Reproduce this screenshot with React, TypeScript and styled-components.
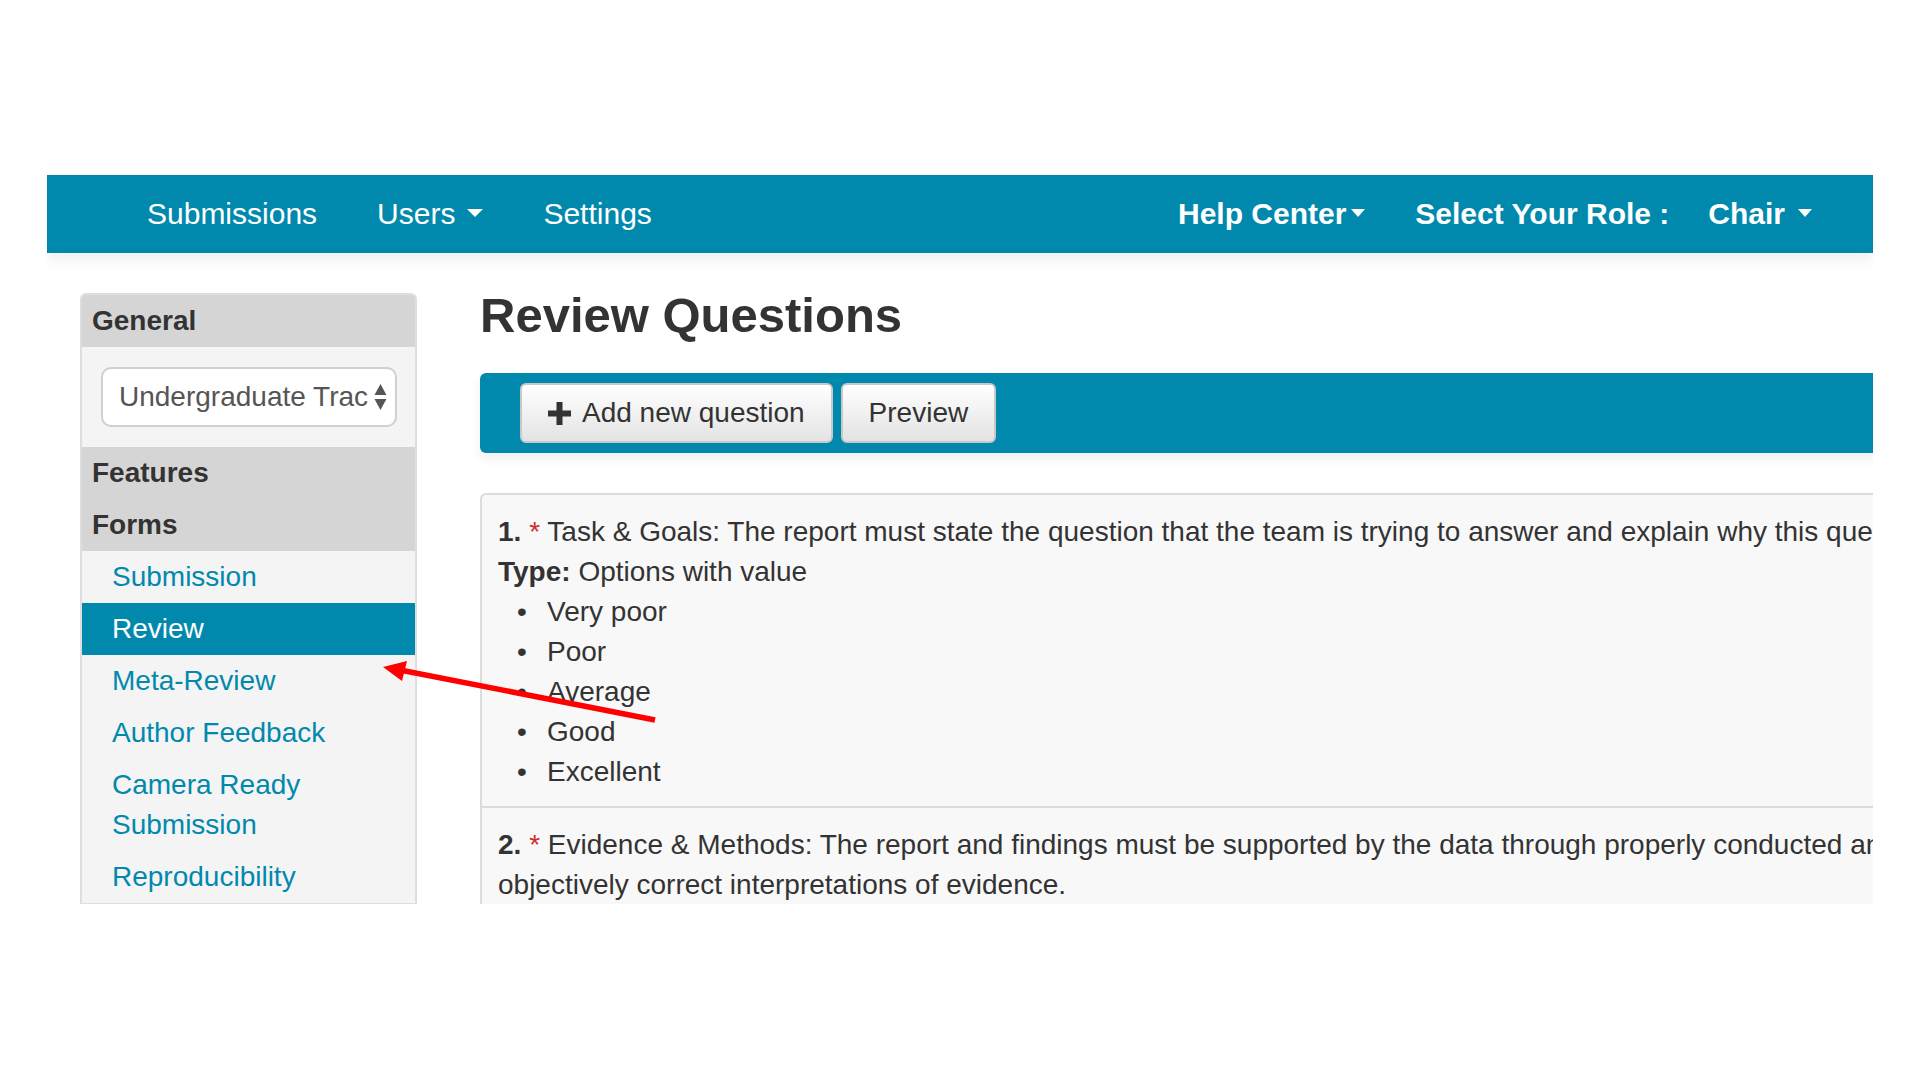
import React from "react";
import styled, { createGlobalStyle } from "styled-components";

const BRAND = "#0189ad";
const FONT = `"Liberation Sans", Arial, Helvetica, sans-serif`;

const GlobalStyle = createGlobalStyle`
  html, body {
    margin: 0;
    padding: 0;
    background: #ffffff;
    font-family: ${FONT};
    color: #333333;
  }
  * { box-sizing: border-box; }
`;

const Page = styled.div`
  position: relative;
  width: 1920px;
  height: 1080px;
  padding: 175px 0 0 47px;
  overflow: hidden;
`;

const Frame = styled.div`
  width: 1826px;
  height: 729px;
  overflow: hidden;
  display: flex;
  flex-direction: column;
  background: #ffffff;
`;

const NavBar = styled.nav`
  flex: 0 0 78px;
  height: 78px;
  background: ${BRAND};
  display: flex;
  align-items: center;
  padding: 0 61px 0 70px;
  box-shadow: 0 6px 14px rgba(0, 0, 0, 0.07);
  position: relative;
  z-index: 1;
`;

const NavGroup = styled.div<{ $right?: boolean }>`
  display: flex;
  align-items: center;
  margin-left: ${(p) => (p.$right ? "auto" : "0")};
`;

const NavItem = styled.div<{ $bold?: boolean; $gap?: number; $pad?: number; $ml?: number }>`
  display: flex;
  align-items: center;
  gap: ${(p) => p.$gap ?? 12}px;
  padding: 0 ${(p) => p.$pad ?? 30}px;
  margin-left: ${(p) => p.$ml ?? 0}px;
  color: #ffffff;
  font-size: 30px;
  font-weight: ${(p) => (p.$bold ? 700 : 400)};
  line-height: 40px;
  white-space: nowrap;
`;

const Caret = styled.span<{ $w?: number }>`
  display: inline-block;
  width: 0;
  height: 0;
  border-left: ${(p) => (p.$w ?? 15) / 2}px solid transparent;
  border-right: ${(p) => (p.$w ?? 15) / 2}px solid transparent;
  border-top: 8px solid #ffffff;
  margin-top: -3px;
`;

const ContentRow = styled.div`
  display: flex;
  align-items: flex-start;
  gap: 63px;
  padding: 40px 0 0 33px;
`;

const Sidebar = styled.aside`
  flex: 0 0 337px;
  width: 337px;
  border: 2px solid #dedede;
  border-radius: 6px 6px 0 0;
  background: #f4f4f4;
  overflow: hidden;
`;

const SideHeader = styled.div`
  height: 52px;
  line-height: 52px;
  padding-left: 10px;
  background: #d5d5d5;
  font-size: 28px;
  font-weight: 700;
  color: #333333;
`;

const SelectPanel = styled.div`
  height: 100px;
  padding: 20px 18px 20px 19px;
`;

const SelectBox = styled.div`
  height: 60px;
  background: #ffffff;
  border: 2px solid #cfcfcf;
  border-radius: 10px;
  display: flex;
  align-items: center;
  padding: 0 8px 0 16px;
  gap: 6px;
`;

const SelectText = styled.span`
  width: 250px;
  overflow: hidden;
  white-space: nowrap;
  font-size: 28px;
  color: #555555;
`;

const SideLink = styled.div<{ $active?: boolean }>`
  padding: 6px 12px 6px 30px;
  font-size: 28px;
  line-height: 40px;
  color: ${(p) => (p.$active ? "#ffffff" : BRAND)};
  background: ${(p) => (p.$active ? BRAND : "transparent")};
`;

const Main = styled.main`
  flex: 0 0 1678px;
  width: 1678px;
`;

const Title = styled.h1`
  margin: 0;
  font-size: 49px;
  line-height: 45px;
  font-weight: 700;
  color: #333333;
`;

const Toolbar = styled.div`
  margin-top: 35px;
  height: 80px;
  background: ${BRAND};
  border-radius: 6px 0 0 6px;
  display: flex;
  align-items: center;
  gap: 8px;
  padding-left: 40px;
  box-shadow: 0 6px 12px rgba(0, 0, 0, 0.06);
`;

const Button = styled.button`
  height: 60px;
  padding: 0 26px;
  display: flex;
  align-items: center;
  gap: 11px;
  border: 2px solid #c8c8c8;
  border-radius: 6px;
  background: linear-gradient(#ffffff, #e3e3e3);
  font-family: ${FONT};
  font-size: 28px;
  color: #333333;
`;

const QuestionList = styled.div`
  margin-top: 40px;
  border: 2px solid #dcdcdc;
  border-radius: 6px 0 0 0;
  background: #f8f8f8;
`;

const Question = styled.div<{ $first?: boolean }>`
  padding: 17px 16px 14px;
  font-size: 28px;
  line-height: 40px;
  color: #333333;
  border-top: ${(p) => (p.$first ? "none" : "2px solid #dcdcdc")};
`;

const Num = styled.b`
  font-weight: 700;
`;

const Star = styled.span`
  color: #c9302c;
`;

const Options = styled.ul`
  margin: 0;
  padding-left: 19px;
  list-style: none;
`;

const Option = styled.li`
  display: flex;
  &::before {
    content: "•";
    flex: 0 0 30px;
    width: 30px;
  }
`;

const Overlay = styled.svg`
  position: absolute;
  left: 0;
  top: 0;
  width: 1920px;
  height: 1080px;
  pointer-events: none;
`;

const PlusIcon = () => (
  <svg width="23" height="23" viewBox="0 0 23 23">
    <rect x="8.5" y="0" width="6" height="23" fill="#333" />
    <rect x="0" y="8.5" width="23" height="6" fill="#333" />
  </svg>
);

const SortArrows = () => (
  <svg width="13" height="30" viewBox="0 0 13 30">
    <polygon points="6.5,2 12.5,13 0.5,13" fill="#555" />
    <polygon points="0.5,17 12.5,17 6.5,28" fill="#555" />
  </svg>
);

const options = ["Very poor", "Poor", "Average", "Good", "Excellent"];

export default function App() {
  return (
    <Page>
      <GlobalStyle />
      <Frame>
        <NavBar>
          <NavGroup>
            <NavItem>Submissions</NavItem>
            <NavItem>
              Users <Caret $w={16} />
            </NavItem>
            <NavItem>Settings</NavItem>
          </NavGroup>
          <NavGroup $right>
            <NavItem $bold $gap={5} $pad={0}>
              Help Center
              <Caret $w={15} />
            </NavItem>
            <NavItem $bold $pad={0} $ml={50}>
              Select Your Role :
            </NavItem>
            <NavItem $bold $gap={13} $pad={0} $ml={39}>
              Chair <Caret $w={14} />
            </NavItem>
          </NavGroup>
        </NavBar>

        <ContentRow>
          <Sidebar>
            <SideHeader>General</SideHeader>
            <SelectPanel>
              <SelectBox>
                <SelectText>Undergraduate Track</SelectText>
                <SortArrows />
              </SelectBox>
            </SelectPanel>
            <SideHeader>Features</SideHeader>
            <SideHeader>Forms</SideHeader>
            <SideLink>Submission</SideLink>
            <SideLink $active>Review</SideLink>
            <SideLink>Meta-Review</SideLink>
            <SideLink>Author Feedback</SideLink>
            <SideLink>Camera Ready Submission</SideLink>
            <SideLink>Reproducibility</SideLink>
          </Sidebar>

          <Main>
            <Title>Review Questions</Title>
            <Toolbar>
              <Button>
                <PlusIcon />
                Add new question
              </Button>
              <Button>Preview</Button>
            </Toolbar>
            <QuestionList>
              <Question $first>
                <div>
                  <Num>1.</Num> <Star>*</Star> Task &amp; Goals: The report must state the question that the
                  team is trying to answer and explain why this question is important.
                </div>
                <div>
                  <Num>Type:</Num> Options with value
                </div>
                <Options>
                  {options.map((o) => (
                    <Option key={o}>{o}</Option>
                  ))}
                </Options>
              </Question>
              <Question>
                <div>
                  <Num>2.</Num> <Star>*</Star> Evidence &amp; Methods: The report and findings must be
                  supported by the data through properly conducted analyses and objectively correct
                  interpretations of evidence.
                </div>
              </Question>
            </QuestionList>
          </Main>
        </ContentRow>
      </Frame>

      <Overlay viewBox="0 0 1920 1080">
        <line x1="655" y1="720" x2="400" y2="670" stroke="#ff0000" strokeWidth="5.5" />
        <polygon points="383,667 407,661 402,681" fill="#ff0000" />
      </Overlay>
    </Page>
  );
}
